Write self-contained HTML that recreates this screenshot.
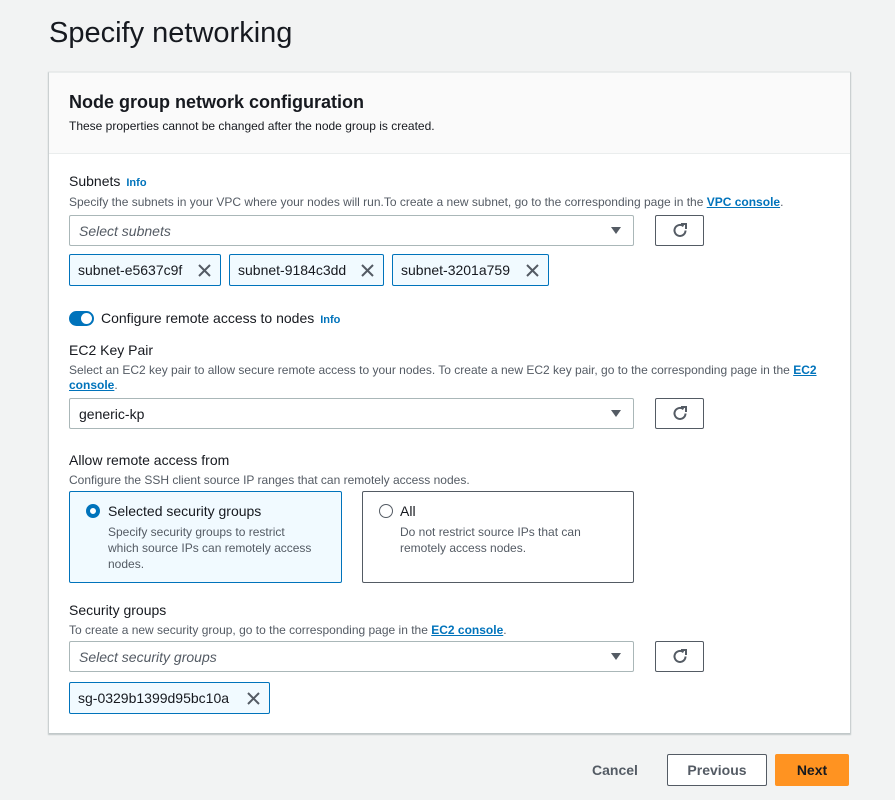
<!DOCTYPE html>
<html><head><meta charset="utf-8"><style>
*{box-sizing:border-box;margin:0;padding:0}
body{width:895px;height:800px;background:#f2f3f3;font-family:"Liberation Sans",sans-serif;color:#16191f;position:relative;overflow:hidden}
.a{position:absolute;white-space:nowrap}
h1{position:absolute;left:49px;top:17px;font-size:29px;font-weight:normal;color:#16191f}
.card{position:absolute;left:49px;top:72px;width:801px;height:661px;background:#fff;box-shadow:0 1px 1px 1px rgba(0,28,36,.2);border-top:1px solid #eaeded}
.hdr{position:absolute;left:0;top:0;width:100%;height:81px;background:#fafafa;border-bottom:1px solid #eaeded}
.lbl{font-size:14px;color:#16191f}
.desc{font-size:12px;color:#545b64}
.info{font-size:11px;font-weight:bold;color:#0073bb;margin-left:6px}
a{color:#0073bb;font-weight:bold;text-decoration:underline}
.sel{position:absolute;left:69px;width:565px;height:31px;border:1px solid #aab7b8;border-radius:2px;font-size:14px;padding:7px 9px}
.sel i{color:#545b64}
.sel .tri{position:absolute;right:12px;top:11px;width:0;height:0;border-left:5px solid transparent;border-right:5px solid transparent;border-top:7px solid #545b64}
.ref{position:absolute;left:655px;width:49px;height:31px;border:1px solid #545b64;border-radius:2px;background:#fff}
.ref svg{position:absolute;left:15px;top:6px}
.tok{position:absolute;height:32px;border:1px solid #0073bb;background:#f1faff;border-radius:2px;font-size:14px;padding:7px 8px}
.tok svg{position:absolute;right:9px;top:9px}
.tile{position:absolute;top:491px;height:92px;border:1px solid #545b64;border-radius:2px;padding:0}
.btn{position:absolute;top:754px;height:32px;font-size:14px;font-weight:bold;text-align:center;line-height:30px;border-radius:2px}
</style></head><body>
<h1>Specify networking</h1>
<div class="card"><div class="hdr"></div></div>
<div class="a" style="left:69px;top:92px;font-size:18px;font-weight:bold">Node group network configuration</div>
<div class="a desc" style="left:69px;top:119px;color:#16191f;font-size:12px">These properties cannot be changed after the node group is created.</div>

<div class="a lbl" style="left:69px;top:173px">Subnets<span class="info">Info</span></div>
<div class="a desc" style="left:69px;top:195px">Specify the subnets in your VPC where your nodes will run.To create a new subnet, go to the corresponding page in the <a>VPC console</a>.</div>
<div class="sel" style="top:215px"><i>Select subnets</i><span class="tri"></span></div>
<div class="ref" style="top:215px"><svg width="18" height="18" viewBox="0 0 18 18"><path d="M14.5 8.5a5.5 5.5 0 1 1-2-4.3" fill="none" stroke="#545b64" stroke-width="2"/><path d="M10 2h5v5" fill="none" stroke="#545b64" stroke-width="2"/></svg></div>
<div class="tok" style="left:69px;top:254px;width:152px">subnet-e5637c9f<svg width="13" height="13"><path d="M1 1l11 11M12 1L1 12" stroke="#545b64" stroke-width="2"/></svg></div>
<div class="tok" style="left:229px;top:254px;width:155px">subnet-9184c3dd<svg width="13" height="13"><path d="M1 1l11 11M12 1L1 12" stroke="#545b64" stroke-width="2"/></svg></div>
<div class="tok" style="left:392px;top:254px;width:157px">subnet-3201a759<svg width="13" height="13"><path d="M1 1l11 11M12 1L1 12" stroke="#545b64" stroke-width="2"/></svg></div>

<div class="a" style="left:69px;top:311px;width:25px;height:15px;border-radius:8px;background:#0073bb"><div style="position:absolute;right:2px;top:2px;width:11px;height:11px;border-radius:50%;background:#fff"></div></div>
<div class="a lbl" style="left:101px;top:310px">Configure remote access to nodes<span class="info">Info</span></div>

<div class="a lbl" style="left:69px;top:342px">EC2 Key Pair</div>
<div class="a desc" style="left:69px;top:363px">Select an EC2 key pair to allow secure remote access to your nodes. To create a new EC2 key pair, go to the corresponding page in the <a>EC2</a></div>
<div class="a desc" style="left:69px;top:378px"><a>console</a>.</div>
<div class="sel" style="top:398px">generic-kp<span class="tri"></span></div>
<div class="ref" style="top:398px"><svg width="18" height="18" viewBox="0 0 18 18"><path d="M14.5 8.5a5.5 5.5 0 1 1-2-4.3" fill="none" stroke="#545b64" stroke-width="2"/><path d="M10 2h5v5" fill="none" stroke="#545b64" stroke-width="2"/></svg></div>

<div class="a lbl" style="left:69px;top:452px">Allow remote access from</div>
<div class="a desc" style="left:69px;top:473px">Configure the SSH client source IP ranges that can remotely access nodes.</div>
<div class="tile" style="left:69px;width:273px;border-color:#0073bb;background:#f1faff"></div>
<div class="a" style="left:86px;top:504px;width:14px;height:14px;border-radius:50%;border:4px solid #0073bb;background:#fff"></div>
<div class="a lbl" style="left:108px;top:503px">Selected security groups</div>
<div class="a desc" style="left:108px;top:524px;line-height:16px">Specify security groups to restrict<br>which source IPs can remotely access<br>nodes.</div>
<div class="tile" style="left:362px;width:272px"></div>
<div class="a" style="left:379px;top:504px;width:14px;height:14px;border-radius:50%;border:1px solid #545b64;background:#fff"></div>
<div class="a lbl" style="left:400px;top:503px">All</div>
<div class="a desc" style="left:400px;top:524px;line-height:16px">Do not restrict source IPs that can<br>remotely access nodes.</div>

<div class="a lbl" style="left:69px;top:602px">Security groups</div>
<div class="a desc" style="left:69px;top:623px">To create a new security group, go to the corresponding page in the <a>EC2 console</a>.</div>
<div class="sel" style="top:641px"><i>Select security groups</i><span class="tri"></span></div>
<div class="ref" style="top:641px"><svg width="18" height="18" viewBox="0 0 18 18"><path d="M14.5 8.5a5.5 5.5 0 1 1-2-4.3" fill="none" stroke="#545b64" stroke-width="2"/><path d="M10 2h5v5" fill="none" stroke="#545b64" stroke-width="2"/></svg></div>
<div class="tok" style="left:69px;top:682px;width:201px">sg-0329b1399d95bc10a<svg width="13" height="13"><path d="M1 1l11 11M12 1L1 12" stroke="#545b64" stroke-width="2"/></svg></div>

<div class="btn" style="left:585px;width:60px;color:#545b64;line-height:32px">Cancel</div>
<div class="btn" style="left:667px;width:100px;border:1px solid #545b64;background:#fff;color:#545b64">Previous</div>
<div class="btn" style="left:775px;width:74px;background:#ff9321;color:#16191f;line-height:32px">Next</div>
</body></html>
